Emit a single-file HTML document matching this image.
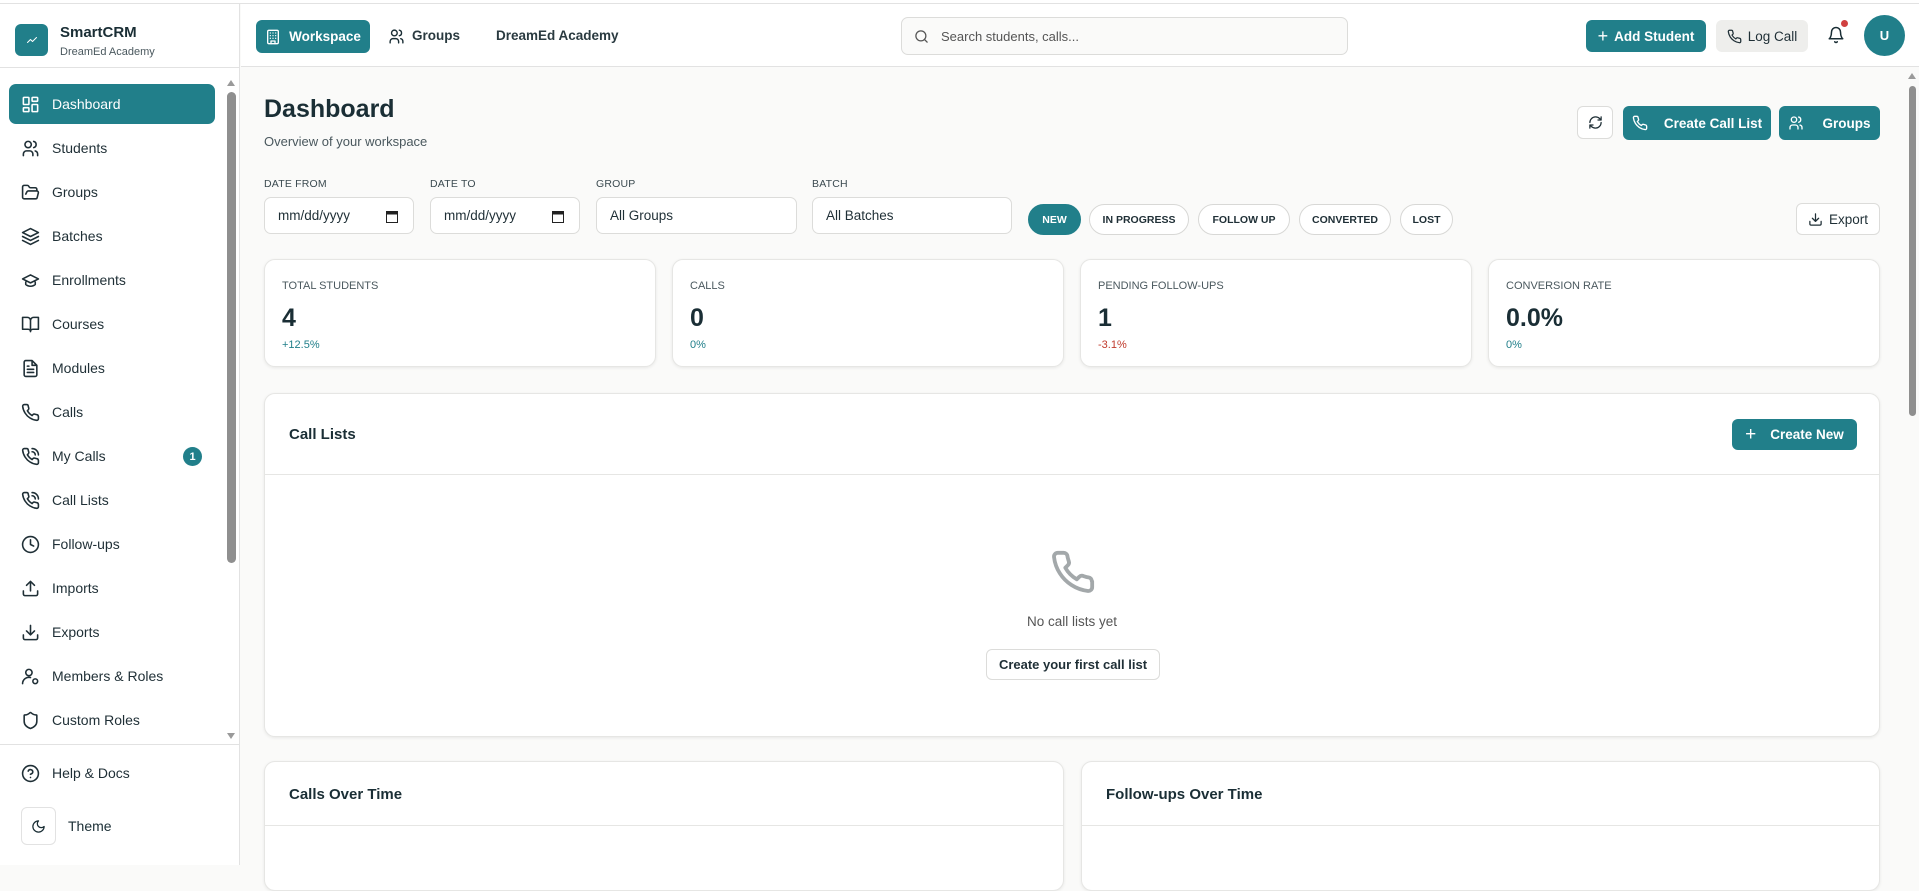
<!DOCTYPE html>
<html><head><meta charset="utf-8"><style>
*{box-sizing:border-box;margin:0;padding:0}
body{width:1919px;height:865px;overflow:hidden;background:#fafaf9;font-family:"Liberation Sans",sans-serif;color:#1a2e35;position:relative}
.a{position:absolute}
svg.i{fill:none;stroke:currentColor;stroke-width:2;stroke-linecap:round;stroke-linejoin:round}
.teal{background:#217f8a;color:#fff}
.btn{position:absolute;display:flex;align-items:center;justify-content:center;gap:8px;border-radius:6px;font-size:13.5px;font-weight:bold}
.nav{position:absolute;left:9px;width:206px;height:40px;display:flex;align-items:center;font-size:14px;color:#1f2f36;border-radius:7px}
.nav svg{position:absolute;left:12px;width:19px;height:19px}
.nav span{position:absolute;left:43px}
.lbl{position:absolute;top:178px;font-size:10.5px;color:#3b4a50;letter-spacing:.2px}
.inp{position:absolute;top:197px;height:37px;border:1px solid #dcdcda;border-radius:7px;background:#fff;font-size:13.5px;display:flex;align-items:center;padding-left:13px;color:#1f2f36}
.pill{position:absolute;top:204px;height:31px;border:1px solid #d8d8d6;border-radius:16px;background:#fff;font-size:10.5px;font-weight:bold;display:flex;align-items:center;justify-content:center;color:#1f2f36}
.pill.on{background:#217f8a;color:#fff;border-color:#217f8a}
.card{position:absolute;background:#fff;border:1px solid #e6e6e4;border-radius:11px;box-shadow:0 1px 3px rgba(0,0,0,.08)}
.sc .l{position:absolute;left:17px;top:20px;font-size:11px;color:#4a585e}
.sc .v{position:absolute;left:17px;top:44px;font-size:25px;font-weight:bold}
.sc .d{position:absolute;left:17px;top:79px;font-size:11px;color:#217f8a}
</style></head><body>
<div class="a" style="left:0;top:0;width:1919px;height:4px;background:#fff;border-bottom:1px solid #e2e2e2"></div>
<!-- sidebar -->
<div class="a" style="left:0;top:4px;width:240px;height:861px;background:#fff;border-right:1px solid #e2e2e2"></div>
<div class="a" style="left:0;top:67px;width:240px;height:1px;background:#e2e2e2"></div>
<div class="a teal" style="left:15px;top:24px;width:33px;height:32px;border-radius:6px;display:flex;align-items:center;justify-content:center"><svg class="i" width="12" height="12" viewBox="0 0 24 24"><path d="M3 17l6-6 4 4 8-8"/></svg></div>
<div class="a" style="left:60px;top:24px;font-size:15px;font-weight:bold">SmartCRM</div>
<div class="a" style="left:60px;top:46px;font-size:11px;color:#4a585e">DreamEd Academy</div>

<div class="nav teal" style="top:84px;color:#fff"><svg class="i" viewBox="0 0 24 24"><rect x="3" y="3" width="7" height="9" rx="1"/><rect x="14" y="3" width="7" height="5" rx="1"/><rect x="14" y="12" width="7" height="9" rx="1"/><rect x="3" y="16" width="7" height="5" rx="1"/></svg><span>Dashboard</span></div>
<div class="nav" style="top:128px"><svg class="i" viewBox="0 0 24 24"><circle cx="9" cy="7" r="4"/><path d="M3 21v-2a4 4 0 014-4h4a4 4 0 014 4v2M16 3.1a4 4 0 010 7.8M21 21v-2a4 4 0 00-3-3.9"/></svg><span>Students</span></div>
<div class="nav" style="top:172px"><svg class="i" viewBox="0 0 24 24"><path d="M6 14l1.5-2.9A2 2 0 019.2 10H20a2 2 0 011.9 2.5l-1.5 6A2 2 0 0118.5 20H4a2 2 0 01-2-2V5a2 2 0 012-2h3.9a2 2 0 011.7.9l.8 1.2a2 2 0 001.7.9H18a2 2 0 012 2v2"/></svg><span>Groups</span></div>
<div class="nav" style="top:216px"><svg class="i" viewBox="0 0 24 24"><path d="M12 2l10 5-10 5L2 7z M2 12l10 5 10-5 M2 17l10 5 10-5"/></svg><span>Batches</span></div>
<div class="nav" style="top:260px"><svg class="i" viewBox="0 0 24 24"><path d="M22 10L12 5 2 10l10 5 10-5z M6 12v5c3 3 9 3 12 0v-5"/></svg><span>Enrollments</span></div>
<div class="nav" style="top:304px"><svg class="i" viewBox="0 0 24 24"><path d="M2 3h6a4 4 0 014 4v14a3 3 0 00-3-3H2z M22 3h-6a4 4 0 00-4 4v14a3 3 0 013-3h7z"/></svg><span>Courses</span></div>
<div class="nav" style="top:348px"><svg class="i" viewBox="0 0 24 24"><path d="M14 2H6a2 2 0 00-2 2v16a2 2 0 002 2h12a2 2 0 002-2V8z M14 2v6h6 M16 13H8 M16 17H8 M10 9H8"/></svg><span>Modules</span></div>
<div class="nav" style="top:392px"><svg class="i" viewBox="0 0 24 24"><path d="M22 16.9v3a2 2 0 01-2.2 2 19.8 19.8 0 01-8.6-3.1 19.5 19.5 0 01-6-6A19.8 19.8 0 012.1 4.2 2 2 0 014.1 2h3a2 2 0 012 1.7c.1.9.4 1.8.7 2.7a2 2 0 01-.5 2.1L8 9.8a16 16 0 006 6l1.3-1.3a2 2 0 012.1-.4c.9.3 1.8.6 2.7.7a2 2 0 011.7 2z"/></svg><span>Calls</span></div>
<div class="nav" style="top:436px"><svg class="i" viewBox="0 0 24 24"><path d="M22 16.9v3a2 2 0 01-2.2 2 19.8 19.8 0 01-8.6-3.1 19.5 19.5 0 01-6-6A19.8 19.8 0 012.1 4.2 2 2 0 014.1 2h3a2 2 0 012 1.7c.1.9.4 1.8.7 2.7a2 2 0 01-.5 2.1L8 9.8a16 16 0 006 6l1.3-1.3a2 2 0 012.1-.4c.9.3 1.8.6 2.7.7a2 2 0 011.7 2z M14 2a8 8 0 018 8 M14 6a4 4 0 014 4"/></svg><span>My Calls</span><div class="a teal" style="left:174px;top:11px;width:19px;height:19px;border-radius:50%;font-size:11px;font-weight:bold;display:flex;align-items:center;justify-content:center">1</div></div>
<div class="nav" style="top:480px"><svg class="i" viewBox="0 0 24 24"><path d="M22 16.9v3a2 2 0 01-2.2 2 19.8 19.8 0 01-8.6-3.1 19.5 19.5 0 01-6-6A19.8 19.8 0 012.1 4.2 2 2 0 014.1 2h3a2 2 0 012 1.7c.1.9.4 1.8.7 2.7a2 2 0 01-.5 2.1L8 9.8a16 16 0 006 6l1.3-1.3a2 2 0 012.1-.4c.9.3 1.8.6 2.7.7a2 2 0 011.7 2z M14 2a8 8 0 018 8 M14 6a4 4 0 014 4"/></svg><span>Call Lists</span></div>
<div class="nav" style="top:524px"><svg class="i" viewBox="0 0 24 24"><circle cx="12" cy="12" r="10"/><path d="M12 6v6l4 2"/></svg><span>Follow-ups</span></div>
<div class="nav" style="top:568px"><svg class="i" viewBox="0 0 24 24"><path d="M21 15v4a2 2 0 01-2 2H5a2 2 0 01-2-2v-4 M17 8l-5-5-5 5 M12 3v12"/></svg><span>Imports</span></div>
<div class="nav" style="top:612px"><svg class="i" viewBox="0 0 24 24"><path d="M21 15v4a2 2 0 01-2 2H5a2 2 0 01-2-2v-4 M7 10l5 5 5-5 M12 15V3"/></svg><span>Exports</span></div>
<div class="nav" style="top:656px"><svg class="i" viewBox="0 0 24 24"><circle cx="10" cy="7" r="4"/><path d="M2 21a8 8 0 0110-7.7"/><circle cx="18" cy="18" r="3"/></svg><span>Members &amp; Roles</span></div>
<div class="nav" style="top:700px"><svg class="i" viewBox="0 0 24 24"><path d="M20 13c0 5-3.5 7.5-7.7 9a1 1 0 01-.7 0C7.5 20.5 4 18 4 13V6a1 1 0 011-1c2 0 4.5-1.2 6.2-2.7a1 1 0 011.5 0C14.5 3.8 17 5 19 5a1 1 0 011 1z"/></svg><span>Custom Roles</span></div>
<div class="a" style="left:227px;top:80px;width:0;height:0;border:4px solid transparent;border-bottom:6px solid #9a9a9a;border-top:0"></div>
<div class="a" style="left:227px;top:92px;width:9px;height:471px;background:#8f8f8f;border-radius:5px"></div>
<div class="a" style="left:227px;top:733px;width:0;height:0;border:4px solid transparent;border-top:6px solid #9a9a9a;border-bottom:0"></div>
<div class="a" style="left:0;top:744px;width:240px;height:1px;background:#e2e2e2"></div>
<div class="nav" style="top:753px"><svg class="i" viewBox="0 0 24 24"><circle cx="12" cy="12" r="10"/><path d="M9.1 9a3 3 0 015.8 1c0 2-3 3-3 3 M12 17h.01"/></svg><span>Help &amp; Docs</span></div>
<div class="a" style="left:21px;top:807px;width:35px;height:38px;border:1px solid #e2e2e2;border-radius:6px;display:flex;align-items:center;justify-content:center"><svg class="i" width="15" height="15" viewBox="0 0 24 24"><path d="M12 3a6 6 0 009 9 9 9 0 11-9-9z"/></svg></div>
<div class="a" style="left:68px;top:818px;font-size:14px">Theme</div>

<!-- header -->
<div class="a" style="left:241px;top:4px;width:1678px;height:63px;background:#fff;border-bottom:1px solid #e2e2e2"></div>
<div class="btn teal" style="left:256px;top:20px;width:114px;height:33px;font-size:13.5px"><svg class="i" width="16" height="16" viewBox="0 0 24 24"><rect x="4" y="2" width="16" height="20" rx="2"/><path d="M9 22v-4h6v4 M8 6h.01M16 6h.01M12 6h.01M12 10h.01M12 14h.01M16 10h.01M16 14h.01M8 10h.01M8 14h.01"/></svg>Workspace</div>
<svg class="i a" style="left:388px;top:28px" width="17" height="17" viewBox="0 0 24 24"><circle cx="9" cy="7" r="4"/><path d="M3 21v-2a4 4 0 014-4h4a4 4 0 014 4v2M16 3.1a4 4 0 010 7.8M21 21v-2a4 4 0 00-3-3.9"/></svg>
<div class="a" style="left:412px;top:28px;font-size:13.5px;font-weight:bold;color:#2a3a40">Groups</div>
<div class="a" style="left:496px;top:28px;font-size:13.5px;font-weight:bold;color:#2a3a40">DreamEd Academy</div>
<div class="a" style="left:901px;top:17px;width:447px;height:38px;border:1px solid #dcdcda;border-radius:7px;background:#fafaf9"></div>
<svg class="i a" style="left:914px;top:29px;color:#555" width="15" height="15" viewBox="0 0 24 24"><circle cx="11" cy="11" r="8"/><path d="M21 21l-4.3-4.3"/></svg>
<div class="a" style="left:941px;top:29px;font-size:13px;color:#555">Search students, calls...</div>
<div class="btn teal" style="left:1586px;top:20px;width:120px;height:32px;gap:6px"><span style="font-size:18px;font-weight:normal">+</span>Add Student</div>
<div class="btn" style="left:1716px;top:20px;width:92px;height:32px;background:#eeeeec;color:#1f2f36;font-weight:normal;gap:6px"><svg class="i" width="15" height="15" viewBox="0 0 24 24"><path d="M22 16.9v3a2 2 0 01-2.2 2 19.8 19.8 0 01-8.6-3.1 19.5 19.5 0 01-6-6A19.8 19.8 0 012.1 4.2 2 2 0 014.1 2h3a2 2 0 012 1.7c.1.9.4 1.8.7 2.7a2 2 0 01-.5 2.1L8 9.8a16 16 0 006 6l1.3-1.3a2 2 0 012.1-.4c.9.3 1.8.6 2.7.7a2 2 0 011.7 2z"/></svg>Log Call</div>
<svg class="i a" style="left:1827px;top:26px" width="18" height="18" viewBox="0 0 24 24"><path d="M6 8a6 6 0 0112 0c0 7 3 9 3 9H3s3-2 3-9 M10.3 21a1.9 1.9 0 003.4 0"/></svg>
<div class="a" style="left:1841px;top:20px;width:7px;height:7px;border-radius:50%;background:#d04040"></div>
<div class="a teal" style="left:1864px;top:15px;width:41px;height:41px;border-radius:50%;display:flex;align-items:center;justify-content:center;font-size:13px;font-weight:bold">U</div>

<!-- main scrollbar -->
<div class="a" style="left:1906px;top:68px;width:13px;height:797px;background:#fafaf9"></div>
<div class="a" style="left:1908px;top:73px;width:0;height:0;border:4px solid transparent;border-bottom:6px solid #9a9a9a;border-top:0"></div>
<div class="a" style="left:1909px;top:86px;width:7px;height:330px;background:#8f8f8f;border-radius:4px"></div>

<!-- content -->
<div class="a" style="left:264px;top:95px;font-size:25px;font-weight:bold">Dashboard</div>
<div class="a" style="left:264px;top:134px;font-size:13px;color:#4a585e">Overview of your workspace</div>
<div class="btn" style="left:1577px;top:106px;width:36px;height:33px;background:#fff;border:1px solid #dcdcda;color:#1f2f36"><svg class="i" width="15" height="15" viewBox="0 0 24 24"><path d="M3 12a9 9 0 019-9 9.8 9.8 0 016.7 2.7L21 8 M21 3v5h-5 M21 12a9 9 0 01-9 9 9.8 9.8 0 01-6.7-2.7L3 16 M8 16H3v5"/></svg></div>
<div class="btn teal" style="left:1623px;top:106px;width:148px;height:34px;gap:16px"><svg class="i" width="16" height="16" viewBox="0 0 24 24"><path d="M22 16.9v3a2 2 0 01-2.2 2 19.8 19.8 0 01-8.6-3.1 19.5 19.5 0 01-6-6A19.8 19.8 0 012.1 4.2 2 2 0 014.1 2h3a2 2 0 012 1.7c.1.9.4 1.8.7 2.7a2 2 0 01-.5 2.1L8 9.8a16 16 0 006 6l1.3-1.3a2 2 0 012.1-.4c.9.3 1.8.6 2.7.7a2 2 0 011.7 2z"/></svg>Create Call List</div>
<div class="btn teal" style="left:1779px;top:106px;width:101px;height:34px;gap:18px"><svg class="i" width="16" height="16" viewBox="0 0 24 24"><circle cx="9" cy="7" r="4"/><path d="M3 21v-2a4 4 0 014-4h4a4 4 0 014 4v2M16 3.1a4 4 0 010 7.8M21 21v-2a4 4 0 00-3-3.9"/></svg>Groups</div>

<div class="lbl" style="left:264px">DATE FROM</div>
<div class="lbl" style="left:430px">DATE TO</div>
<div class="lbl" style="left:596px">GROUP</div>
<div class="lbl" style="left:812px">BATCH</div>
<div class="inp" style="left:264px;width:150px">mm/dd/yyyy<svg class="a" style="left:121px;top:12px" width="12" height="13" viewBox="0 0 12 13"><rect x="0.5" y="1.5" width="11" height="11" fill="none" stroke="#222"/><rect x="0.5" y="1.5" width="11" height="3" fill="#222"/></svg></div>
<div class="inp" style="left:430px;width:150px">mm/dd/yyyy<svg class="a" style="left:121px;top:12px" width="12" height="13" viewBox="0 0 12 13"><rect x="0.5" y="1.5" width="11" height="11" fill="none" stroke="#222"/><rect x="0.5" y="1.5" width="11" height="3" fill="#222"/></svg></div>
<div class="inp" style="left:596px;width:201px">All Groups</div>
<div class="inp" style="left:812px;width:200px">All Batches</div>
<div class="pill on" style="left:1028px;width:53px">NEW</div>
<div class="pill" style="left:1089px;width:100px">IN PROGRESS</div>
<div class="pill" style="left:1198px;width:92px">FOLLOW UP</div>
<div class="pill" style="left:1299px;width:92px">CONVERTED</div>
<div class="pill" style="left:1400px;width:53px">LOST</div>
<div class="btn" style="left:1796px;top:203px;width:84px;height:32px;background:#fff;border:1px solid #dcdcda;color:#1f2f36;font-weight:normal;font-size:13.5px;gap:6px"><svg class="i" width="15" height="15" viewBox="0 0 24 24"><path d="M21 15v4a2 2 0 01-2 2H5a2 2 0 01-2-2v-4 M7 10l5 5 5-5 M12 15V3"/></svg>Export</div>

<div class="card sc" style="left:264px;top:259px;width:392px;height:108px"><div class="l">TOTAL STUDENTS</div><div class="v">4</div><div class="d">+12.5%</div></div>
<div class="card sc" style="left:672px;top:259px;width:392px;height:108px"><div class="l">CALLS</div><div class="v">0</div><div class="d">0%</div></div>
<div class="card sc" style="left:1080px;top:259px;width:392px;height:108px"><div class="l">PENDING FOLLOW-UPS</div><div class="v">1</div><div class="d" style="color:#c0392b">-3.1%</div></div>
<div class="card sc" style="left:1488px;top:259px;width:392px;height:108px"><div class="l">CONVERSION RATE</div><div class="v">0.0%</div><div class="d">0%</div></div>

<div class="card" style="left:264px;top:393px;width:1616px;height:344px">
 <div class="a" style="left:24px;top:32px;font-size:15px;font-weight:bold">Call Lists</div>
 <div class="btn teal" style="left:1467px;top:25px;width:125px;height:31px;gap:14px;font-size:13.5px"><span style="font-size:19px;font-weight:normal">+</span>Create New</div>
 <div class="a" style="left:0;top:80px;width:1614px;height:1px;background:#e6e6e4"></div>
 <svg class="i a" style="left:785px;top:155px;color:#a3a8aa" width="46" height="46" viewBox="0 0 24 24" stroke-width="1.6"><path d="M22 16.9v3a2 2 0 01-2.2 2 19.8 19.8 0 01-8.6-3.1 19.5 19.5 0 01-6-6A19.8 19.8 0 012.1 4.2 2 2 0 014.1 2h3a2 2 0 012 1.7c.1.9.4 1.8.7 2.7a2 2 0 01-.5 2.1L8 9.8a16 16 0 006 6l1.3-1.3a2 2 0 012.1-.4c.9.3 1.8.6 2.7.7a2 2 0 011.7 2z"/></svg>
 <div class="a" style="left:0;width:1614px;top:220px;text-align:center;font-size:13.5px;color:#555">No call lists yet</div>
 <div class="btn" style="left:721px;top:255px;width:174px;height:31px;background:#fff;border:1px solid #dcdcda;color:#1f2f36;font-size:13px">Create your first call list</div>
</div>

<div class="card" style="left:264px;top:761px;width:800px;height:130px">
 <div class="a" style="left:24px;top:24px;font-size:15px;font-weight:bold">Calls Over Time</div>
 <div class="a" style="left:0;top:63px;width:798px;height:1px;background:#e6e6e4"></div>
</div>
<div class="card" style="left:1081px;top:761px;width:799px;height:130px">
 <div class="a" style="left:24px;top:24px;font-size:15px;font-weight:bold">Follow-ups Over Time</div>
 <div class="a" style="left:0;top:63px;width:797px;height:1px;background:#e6e6e4"></div>
</div>
</body></html>
